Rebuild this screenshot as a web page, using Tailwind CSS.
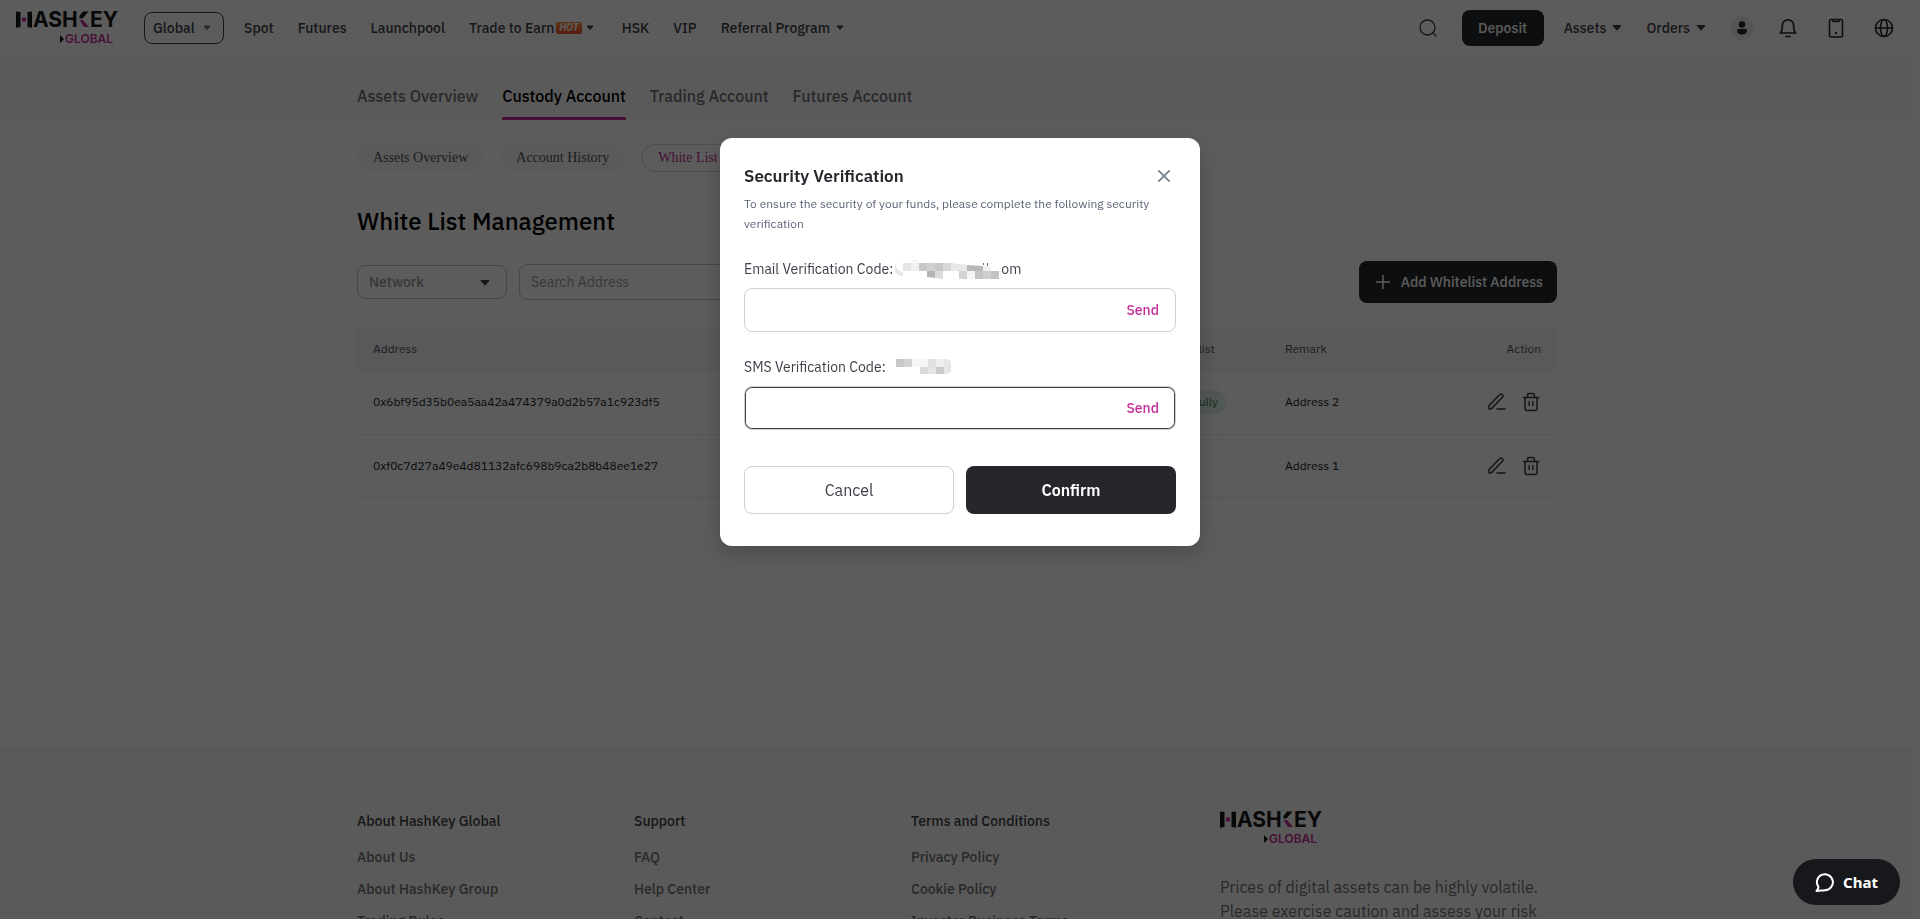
<!DOCTYPE html>
<html lang="en">
  <head>
    <meta charset="UTF-8" />
    <meta name="viewport" content="width=device-width, initial-scale=1.0" />
    <title>White List Management | HashKey Global</title>
    <script src="https://cdn.jsdelivr.net/npm/@tailwindcss/browser@4"></script>
  </head>
  <body
    class="h-screen overflow-hidden bg-white pr-1.5 font-['IBM_Plex_Sans','Roboto',sans-serif] text-[#3f3f4a]"
  >
    <!-- Shared icons -->
    <svg class="hidden">
      <symbol id="logo" viewBox="0 0 104 34">
        <path d="M0 .5l4.500.6v14.800L0 16.700zM16 .5v16.200l-4.500-.8V1.100z" fill="#18181b" />
        <path d="M6 6.500h4v4H6z" fill="#c42e97" />
        <text x="17" y="16" font-family="Inter" font-weight="700" font-size="21" fill="#18181b">ASH</text>
        <path d="M67 .5h5.500l-6 7H63.500V5z" fill="#18181b" />
        <path d="M63.500 9H67l6 7h-5z" fill="#c42e97" />
        <text x="74" y="16" font-family="Inter" font-weight="700" font-size="21" fill="#18181b">EY</text>
        <path d="M44 24l4 4-4 4z" fill="#18181b" />
        <text x="49" y="32" font-family="Inter" font-weight="600" font-size="12" fill="#c42e97">GLOBAL</text>
      </symbol>
      <symbol id="caret" viewBox="0 0 8 6">
        <path d="M1 1h6L4 4.500z" fill="currentColor" stroke="currentColor" stroke-linejoin="round" />
      </symbol>
      <symbol id="edit" viewBox="0 0 20 20" fill="none" stroke="currentColor" stroke-width="1.500" stroke-linecap="round" stroke-linejoin="round">
        <path d="M2 13.600L12.900 2.500a1.700 1.700 0 0 1 2.500 0l.2.200a1.700 1.700 0 0 1 0 2.400L5 16.300 2 17z" />
        <path d="M10 17h8" />
      </symbol>
      <symbol id="trash" viewBox="0 0 20 20" fill="none" stroke="currentColor" stroke-width="1.500" stroke-linecap="round" stroke-linejoin="round">
        <path d="M2.500 5.500h15M4 5.500V16a2.500 2.500 0 0 0 2.500 2.500h7A2.500 2.500 0 0 0 16 16V5.500M6.500 5.500V3A1.500 1.500 0 0 1 8 1.500h4A1.500 1.500 0 0 1 13.500 3v2.500M8.200 9.500v4M11.800 9.500v4" />
      </symbol>
    </svg>

    <!-- Navbar -->
    <header class="flex h-[55px] items-center justify-between pl-4 pr-4.5 pt-px text-sm font-medium">
      <nav class="flex items-center">
        <a href="#" aria-label="HashKey Global"
          ><svg class="h-[34px] w-[104px]"><use href="#logo" /></svg
        ></a>
        <button
          class="ml-6 flex h-8 w-20 items-center justify-between rounded-lg border border-[#3f3f4a] pl-2 pr-3"
        >
          Global
          <svg class="h-[6px] w-2 text-[#71717a]"><use href="#caret" /></svg>
        </button>
        <div class="ml-5 flex items-center gap-6">
          <a href="#">Spot</a>
          <a href="#">Futures</a>
          <a href="#">Launchpool</a>
          <a href="#" class="flex items-center"
            >Trade to Earn
            <span
              class="ml-0.5 flex h-3 items-center rounded-xs bg-linear-to-b from-[#ff8a3c] to-[#ee4f31] px-[3px] font-[Roboto] text-[10px] font-bold italic text-white"
              >HOT</span
            >
            <svg class="ml-1 mr-1 h-[6px] w-2"><use href="#caret" /></svg
          ></a>
          <a href="#">HSK</a>
          <a href="#">VIP</a>
          <a href="#" class="flex items-center"
            >Referral Program
            <svg class="ml-1.5 h-[6px] w-2"><use href="#caret" /></svg
          ></a>
        </div>
      </nav>
      <div class="flex items-center">
        <button aria-label="Search">
          <svg class="size-5" viewBox="0 0 20 20" fill="none" stroke="currentColor" stroke-width="1.300" stroke-linecap="round">
            <circle cx="9.500" cy="9.500" r="7.500" />
            <path d="M15 15l3 3" />
          </svg>
        </button>
        <button class="ml-6 h-9 w-[82px] rounded-lg bg-[#26272c] font-medium text-white">
          Deposit
        </button>
        <a href="#" class="ml-5 flex items-center gap-1.5"
          >Assets <svg class="h-2 w-2.5"><use href="#caret" /></svg
        ></a>
        <a href="#" class="ml-6 flex items-center gap-1.5"
          >Orders <svg class="h-2 w-2.5"><use href="#caret" /></svg
        ></a>
        <div class="ml-6 flex items-center gap-6 text-[#26272c]">
          <button aria-label="Account" class="-mr-0.5 flex size-6 items-center justify-center rounded-full bg-[#ebebeb]">
            <svg class="h-3.5 w-2.5" viewBox="0 0 10 14" fill="currentColor">
              <circle cx="5" cy="3.500" r="3.200" />
              <path d="M1.500 8h7Q10 8 10 9.500C10 12 8 13.500 5 13.500S0 12 0 9.500Q0 8 1.500 8z" />
            </svg>
          </button>
          <button aria-label="Notifications">
            <svg class="size-6" viewBox="0 0 24 24" fill="none" stroke="currentColor" stroke-width="1.700" stroke-linecap="round" stroke-linejoin="round">
              <path d="M4.500 17c1.200-1.600 1.800-3 1.800-5.500V9.500a5.700 5.700 0 0 1 11.400 0v2c0 2.500.6 3.900 1.800 5.500zM10 20.500h4" />
            </svg>
          </button>
          <button aria-label="Download app">
            <svg class="size-6" viewBox="0 0 24 24" fill="none" stroke="currentColor" stroke-width="1.600" stroke-linejoin="round">
              <rect x="5.500" y="3.500" width="13" height="17.500" rx="1.500" />
              <path d="M9 3.500v2h6v-2" />
              <circle cx="12" cy="17" r="1.200" fill="currentColor" stroke="none" />
            </svg>
          </button>
          <button aria-label="Language">
            <svg class="size-6" viewBox="0 0 24 24" fill="none" stroke="currentColor" stroke-width="1.600">
              <circle cx="12" cy="12" r="8.500" />
              <ellipse cx="12" cy="12" rx="3.500" ry="8.500" />
              <path d="M3.500 12h17" />
            </svg>
          </button>
        </div>
      </div>
    </header>

    <!-- Account tabs -->
    <div class="bg-[#fafafa]">
      <nav class="mx-auto flex h-[65px] max-w-[1200px] gap-6 pt-[18px] text-base font-medium text-[#71717a]">
        <a href="#" class="leading-[46px]">Assets Overview</a>
        <a href="#" class="border-b-3 border-[#c42e97] leading-[46px] text-black">Custody Account</a>
        <a href="#" class="leading-[46px]">Trading Account</a>
        <a href="#" class="leading-[46px]">Futures Account</a>
      </nav>
    </div>

    <main class="mx-auto min-h-[627px] max-w-[1200px] pt-6">
      <nav class="flex gap-4 font-['Liberation_Serif',serif] text-sm text-[#52525b]">
        <a href="#" class="rounded-full border border-[#fafafa] bg-[#fafafa] px-[15px] py-[3px]">Assets Overview</a>
        <a href="#" class="rounded-full border border-[#fafafa] bg-[#fafafa] px-[15px] py-[3px]">Account History</a>
        <a href="#" class="rounded-full border border-[#d4d4d8] px-4 py-[3px] text-[#c42e97]">White List Management</a>
      </nav>

      <h1 class="mt-8 text-2xl leading-[34px] font-medium text-black">White List Management</h1>

      <div class="mt-[23px] flex items-center">
        <div class="relative">
          <select
            aria-label="Network"
            class="h-[34px] w-[150px] appearance-none rounded-lg border border-[#c4c4c8] px-[11px] text-sm font-medium text-[#9a9aa3]"
          >
            <option>Network</option>
          </select>
          <svg class="absolute right-[17px] top-3.5 h-2 w-2.5"><use href="#caret" /></svg>
        </div>
        <input
          type="text"
          aria-label="Search Address"
          placeholder="Search Address"
          class="ml-3 h-9 w-[240px] rounded-lg border border-[#c4c4c8] px-[11px] text-sm placeholder:text-[#9a9aa3]"
        />
        <button
          class="ml-auto flex h-[42px] items-center gap-2 rounded-lg bg-[#26272c] px-3.5 text-sm font-medium text-white"
        >
          <svg class="size-5" viewBox="0 0 20 20" fill="none" stroke="currentColor" stroke-width="1.500">
            <path d="M3 10h14M10 3v14" />
          </svg>
          Add Whitelist Address
        </button>
      </div>

      <table class="mt-6 w-full table-fixed text-left text-xs">
        <thead class="bg-[#f7f7f8] text-[#52525b]">
          <tr class="h-11">
            <th class="w-[40%] px-4 font-normal">Address</th>
            <th class="w-[23%] px-4 font-normal">Network</th>
            <th class="w-[13%] px-4 font-normal">Add to Whitelist</th>
            <th class="px-4 font-normal">Remark</th>
            <th class="w-[10%] px-4 text-right font-normal">Action</th>
          </tr>
        </thead>
        <tbody class="text-[#18181b]">
          <tr class="h-[63px] border-b border-[#e8e8ea]">
            <td class="px-4">0x6bf95d35b0ea5aa42a474379a0d2b57a1c923df5</td>
            <td class="px-4">ETH</td>
            <td class="px-4">
              <span class="ml-3.5 inline-block rounded-full bg-[#e0f2e8] px-2 leading-6 text-[#3c7d58]"
                >Successfully</span
              >
            </td>
            <td class="px-4">Address 2</td>
            <td class="px-4">
              <div class="flex justify-end gap-3.5 text-[#3f3f4a]">
                <button aria-label="Edit Address 2"><svg class="size-5"><use href="#edit" /></svg></button>
                <button aria-label="Delete Address 2"><svg class="size-5"><use href="#trash" /></svg></button>
              </div>
            </td>
          </tr>
          <tr class="h-[63px] border-b border-[#e8e8ea]">
            <td class="px-4">0xf0c7d27a49e4d81132afc698b9ca2b8b48ee1e27</td>
            <td class="px-4">ETH</td>
            <td class="px-4">-</td>
            <td class="px-4">Address 1</td>
            <td class="px-4">
              <div class="flex justify-end gap-3.5 text-[#3f3f4a]">
                <button aria-label="Edit Address 1"><svg class="size-5"><use href="#edit" /></svg></button>
                <button aria-label="Delete Address 1"><svg class="size-5"><use href="#trash" /></svg></button>
              </div>
            </td>
          </tr>
        </tbody>
      </table>
    </main>

    <!-- Footer -->
    <footer class="bg-[#fafafa] pt-16">
      <div class="mx-auto flex max-w-[1200px] text-sm leading-5 text-[#71717a]">
        <div class="flex w-[277px] flex-col gap-3 font-medium">
          <h2 class="mb-1 text-[#3f3f46]">About HashKey Global</h2>
          <a href="#">About Us</a>
          <a href="#">About HashKey Group</a>
          <a href="#">Trading Rules</a>
        </div>
        <div class="flex w-[277px] flex-col gap-3 font-medium">
          <h2 class="mb-1 text-[#3f3f46]">Support</h2>
          <a href="#">FAQ</a>
          <a href="#">Help Center</a>
          <a href="#">Contact</a>
        </div>
        <div class="flex w-[309px] flex-col gap-3 font-medium">
          <h2 class="mb-1 text-[#3f3f46]">Terms and Conditions</h2>
          <a href="#">Privacy Policy</a>
          <a href="#">Cookie Policy</a>
          <a href="#">Investor Business Terms</a>
        </div>
        <div class="flex-1">
          <svg class="h-[34px] w-[104px]"><use href="#logo" /></svg>
          <p class="mt-[30px] text-base leading-6">
            Prices of digital assets can be highly volatile. Please exercise caution and assess your risk
          </p>
        </div>
      </div>
    </footer>

    <!-- Security verification dialog -->
    <div class="fixed inset-0 flex items-start justify-center bg-black/64 pt-[138px]">
      <form
        role="dialog"
        aria-labelledby="dialog-title"
        class="w-full max-w-[480px] rounded-xl bg-white px-6 pb-8 pt-6 shadow-[0_8px_24px_rgba(0,0,0,0.2)]"
      >
        <div class="flex items-center justify-between">
          <h2 id="dialog-title" class="text-[17px] leading-7 font-semibold text-[#26272c]">Security Verification</h2>
          <button type="button" aria-label="Close" class="mr-1.5 text-[#717a8f]">
            <svg class="size-3" viewBox="0 0 12 12" fill="none" stroke="currentColor" stroke-width="1.700" stroke-linecap="round">
              <path d="M.8.800l10.400 10.400M11.200.800L.8 11.200" />
            </svg>
          </button>
        </div>
        <p class="mt-1 text-xs leading-5 text-[#5b6478]">
          To ensure the security of your funds, please complete the following security verification
        </p>

        <div class="mt-[25px] flex items-center text-sm leading-5">
          <label for="email-code">Email Verification Code:</label>
          <svg class="ml-0.5 h-5 w-[106px]" viewBox="0 0 106 20">
            <path d="M0 4q2 9 8 9v4Q0 17 0 10z" fill="#e6e6e6" />
            <path d="M16 1h8v3h-8z" fill="#f7f7f7" />
            <path d="M8 4h8v8H8z" fill="#e6e6e7" />
            <path d="M16 4h8v8h-8z" fill="#f0f0f0" />
            <path d="M24 4h8v8h-8zM40 4h8v8h-8z" fill="#c8c8ca" />
            <path d="M32 4h8v8h-8z" fill="#d0d0d2" />
            <path d="M48 4h8v8h-8z" fill="#d8d8d9" />
            <path d="M56 4l16 2v6H56z" fill="#e8e8e8" />
            <path d="M72 6l16 1v5H72z" fill="#b8b8ba" />
            <path d="M88 7h8v5h-8z" fill="#f0f0f0" />
            <path d="M88 4h1v2h-1zM92 4h1v3h-1z" fill="#6b6b73" />
            <path d="M32 12h8v7l-8-1z" fill="#b4b4b6" />
            <path d="M40 12h8v8l-8-1z" fill="#dadadb" />
            <path d="M64 12h8v8h-8z" fill="#d3d3d5" />
            <path d="M72 12h8v8h-8z" fill="#f5f5f5" />
            <path d="M80 12h8v8h-8zM96 12h8v8h-8z" fill="#c4c4c6" />
            <path d="M88 12h8v8h-8z" fill="#cfcfd1" />
          </svg>
          <span>om</span>
        </div>
        <div class="mt-[9px] flex h-11 items-center rounded-lg border border-[#d0d0d3] px-4">
          <input id="email-code" type="text" class="min-w-0 flex-1 outline-none" />
          <button type="button" class="text-sm font-medium text-[#c42e97]">Send</button>
        </div>

        <div class="mt-[25px] flex items-center text-sm leading-5">
          <label for="sms-code">SMS Verification Code:</label>
          <svg class="ml-2.5 h-4 w-14" viewBox="0 0 56 16">
            <path d="M0 0h8v8H0z" fill="#c8c8ca" />
            <path d="M8 0h8v8H8z" fill="#d3d3d5" />
            <path d="M16 0h16v8H16z" fill="#f7f7f7" />
            <path d="M32 0h8v8h-8z" fill="#e0e0e0" />
            <path d="M40 0h8v8h-8z" fill="#ededed" />
            <path d="M48 0h2q5 0 5 5v6q0 4-5 4h-2z" fill="#e6e6e6" />
            <path d="M24 8h8v7h-8z" fill="#dadadb" />
            <path d="M32 8h8v7h-8z" fill="#e4e4e4" />
            <path d="M40 8h8v7h-8z" fill="#cacacc" />
          </svg>
        </div>
        <div
          class="mt-[9px] flex h-11 items-center rounded-lg border border-[#d0d0d3] px-4 inset-ring-1 inset-ring-[#3f3f4a]"
        >
          <input id="sms-code" type="text" class="min-w-0 flex-1 outline-none" />
          <button type="button" class="text-sm font-medium text-[#c42e97]">Send</button>
        </div>

        <div class="mt-9 grid grid-cols-2 gap-3 text-base">
          <button type="button" class="h-12 rounded-lg border border-[#d0d0d3]">Cancel</button>
          <button type="submit" class="h-12 rounded-lg bg-[#26272c] font-semibold text-white">Confirm</button>
        </div>
      </form>
    </div>

    <!-- Chat launcher -->
    <button
      class="fixed bottom-3.5 right-5 flex h-[46px] items-center gap-2 rounded-full bg-[#17181b] px-[22px] font-['Noto_Sans',sans-serif] text-[15px] font-bold text-white"
    >
      <svg class="size-5" viewBox="0 0 20 20" fill="none" stroke="currentColor" stroke-width="2" stroke-linejoin="round">
        <path d="M3.500 15A8 8 0 1 1 10 18.200c-2.500.3-5 .4-8.500.8 1.200-1.300 1.800-2.500 2-4z" />
      </svg>
      Chat
    </button>
  </body>
</html>
